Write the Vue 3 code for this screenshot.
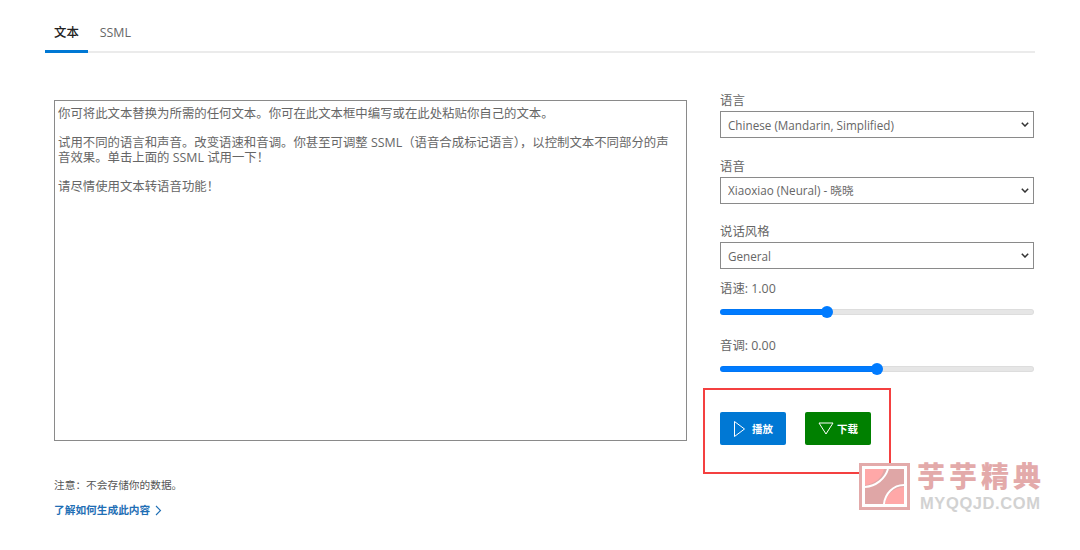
<script setup>
import { ref } from 'vue'

const text = ref('你可将此文本替换为所需的任何文本。你可在此文本框中编写或在此处粘贴你自己的文本。\n\n试用不同的语言和声音。改变语速和音调。你甚至可调整 SSML（语音合成标记语言），以控制文本不同部分的声音效果。单击上面的 SSML 试用一下！\n\n请尽情使用文本转语音功能！')

const selects = [
  { label: '语言', value: 'Chinese (Mandarin, Simplified)' },
  { label: '语音', value: 'Xiaoxiao (Neural) - 晓晓' },
  { label: '说话风格', value: 'General' },
]

const rate = ref(1)
const pitch = ref(0)
const fill = (v, min, max) => ({ '--fill': ((v - min) / (max - min)) * 100 + '%' })
</script>

<template>
  <div class="page">
    <nav class="tabs">
      <a class="tab active">文本</a>
      <a class="tab">SSML</a>
    </nav>

    <div class="main">
      <section class="left">
        <textarea v-model="text" class="editor" spellcheck="false"></textarea>
        <p class="note">注意：不会存储你的数据。</p>
        <a class="learn">了解如何生成此内容
          <svg class="chev" width="7" height="11" viewBox="0 0 7 11"><path d="M1 1l4.5 4.5L1 10" fill="none" stroke="currentColor" stroke-width="1.1"/></svg>
        </a>
      </section>

      <aside class="right">
        <div v-for="s in selects" :key="s.label" class="field">
          <label class="lbl">{{ s.label }}</label>
          <select class="sel"><option>{{ s.value }}</option></select>
        </div>

        <div class="slider">
          <label class="lbl">语速: {{ rate.toFixed(2) }}</label>
          <input v-model.number="rate" class="range" type="range" min="0.5" max="2" step="0.01" :style="fill(rate, 0.5, 2)" />
        </div>
        <div class="slider">
          <label class="lbl">音调: {{ pitch.toFixed(2) }}</label>
          <input v-model.number="pitch" class="range" type="range" min="-0.5" max="0.5" step="0.01" :style="fill(pitch, -0.5, 0.5)" />
        </div>

        <div class="actions">
          <button class="btn play">
            <svg width="13" height="18" viewBox="0 0 13 18"><path d="M1.5 1.5v15L11.5 9z" fill="none" stroke="#fff" stroke-width="1"/></svg>
            <span>播放</span>
          </button>
          <button class="btn down">
            <svg width="16" height="13" viewBox="0 0 16 13"><path d="M1 1h14L8 12z" fill="none" stroke="#fff" stroke-width="1"/></svg>
            <span>下载</span>
          </button>
          <div class="highlight"></div>
        </div>
      </aside>
    </div>

    <div class="watermark">
      <svg class="wm-logo" width="51" height="47" viewBox="0 0 51 47">
        <rect x="1" y="1" width="49" height="45" fill="#e3aaaa" stroke="#e3aaaa" stroke-width="2"/>
        <rect x="3" y="3" width="45" height="41" fill="#fff"/>
        <rect x="6" y="6" width="39" height="35" fill="#dfa6a6"/>
        <path d="M6 6h19c-2 9-9 15-19 16z" fill="#ffa8a8"/>
        <path d="M45 41H26c1-9 8-16 19-17z" fill="#ffa8a8"/>
        <path d="M6 24C17 23 26 16 29 6M25 41c1-10 9-19 20-19" fill="none" stroke="#fff" stroke-width="2"/>
      </svg>
      <div class="wm-text">
        <div class="wm-cn">芋芋精典</div>
        <div class="wm-en">MYQQJD.COM</div>
      </div>
    </div>
  </div>
</template>

<style>
html, body { margin: 0; background: #fff; }
</style>

<style scoped>
.page {
  position: relative;
  width: 1080px;
  height: 550px;
  overflow: hidden;
  padding: 17px 45px 0;
  box-sizing: border-box;
  font-family: "Open Sans", "Noto Sans CJK SC", sans-serif;
  font-size: 12.4px;
  color: #666;
}
.tabs {
  display: flex;
  height: 36px;
  box-sizing: border-box;
  border-bottom: 2px solid #ebebeb;
}
.tab {
  height: 36px;
  box-sizing: border-box;
  padding: 7px 9px 0 9px;
  line-height: 18px;
  color: #666;
  margin-right: 3px;
}
.tab.active {
  color: #222;
  font-weight: 500;
  border-bottom: 3px solid #0078d4;
}
.main {
  display: flex;
  padding: 47px 0 0 9px;
}
.left { width: 633px; margin-right: 33px; }
.editor {
  display: block;
  width: 633px;
  height: 341px;
  box-sizing: border-box;
  border: 1px solid #8a8a8a;
  padding: 6px 6px 5px 3px;
  margin: 0;
  resize: none;
  outline: none;
  font: inherit;
  line-height: 14.6px;
  color: #666;
  background: #fff;
  overflow: hidden;
}
.note {
  margin: 37px 0 0;
  font-size: 10.7px;
  line-height: 14px;
  color: #555;
}
.learn {
  display: flex;
  align-items: center;
  gap: 5px;
  margin-top: 11px;
  font-size: 10.7px;
  font-weight: 700;
  line-height: 14px;
  color: #1f6fb5;
}
.chev { color: #1f6fb5; }
.right {
  width: 314px;
  margin-top: -8px;
}
.field { margin-bottom: 19.5px; }
.field:nth-child(3) { margin-bottom: 0; }
.lbl {
  display: block;
  line-height: 18px;
  margin-bottom: 1px;
  color: #666;
}
.sel {
  display: block;
  width: 314px;
  height: 27px;
  box-sizing: border-box;
  border: 1px solid #8a8a8a;
  border-radius: 0;
  -webkit-appearance: none;
  appearance: none;
  background: #fff url("data:image/svg+xml,%3Csvg xmlns='http://www.w3.org/2000/svg' width='8' height='5'%3E%3Cpath d='M.8.8 4 4 7.2.8' fill='none' stroke='%23333' stroke-width='1.5'/%3E%3C/svg%3E") no-repeat right 4px center;
  padding: 0 3px 0 7px;
  font: inherit;
  font-size: 11.7px;
  color: #666;
  outline: none;
}
.slider { margin-top: 11px; }
.slider + .slider { margin-top: 19px; }
.range {
  display: block;
  -webkit-appearance: none;
  appearance: none;
  width: 314px;
  height: 12px;
  margin: 8px 0 0;
  background: transparent;
}
.range::-webkit-slider-runnable-track {
  height: 6px;
  border-radius: 3px;
  background: linear-gradient(to right, #007bff var(--fill), #e6e6e6 var(--fill));
  box-shadow: inset 0 0 0 1px rgba(0, 0, 0, 0.04);
}
.range::-webkit-slider-thumb {
  -webkit-appearance: none;
  width: 12px;
  height: 12px;
  margin-top: -3px;
  border-radius: 50%;
  background: #007bff;
  border: 0;
}
.actions {
  position: relative;
  display: flex;
  gap: 19px;
  margin-top: 37px;
}
.btn {
  display: flex;
  align-items: center;
  justify-content: center;
  gap: 6px;
  height: 33px;
  border: 0;
  border-radius: 2px;
  color: #fff;
  font: inherit;
  font-size: 10.5px;
  font-weight: 700;
  padding: 0;
}
.btn.play { width: 66px; background: #0078d4; }
.btn.down { width: 66px; background: #008000; gap: 3px; }
.highlight {
  position: absolute;
  left: -17px;
  top: -24px;
  width: 184px;
  height: 82px;
  border: 2.5px solid #f44040;
  pointer-events: none;
}
.watermark {
  position: absolute;
  left: 859px;
  top: 463px;
  display: flex;
  gap: 7px;
}
.wm-text { width: 126px; }
.wm-cn {
  font-family: "Liberation Sans", "Noto Sans CJK SC", sans-serif;
  font-weight: 900;
  font-size: 28px;
  line-height: 30px;
  letter-spacing: 4px;
  color: #e3aaaa;
  white-space: nowrap;
}
.wm-en {
  font-family: "Liberation Sans", sans-serif;
  font-weight: 700;
  font-size: 16.5px;
  line-height: 16px;
  letter-spacing: 0.6px;
  color: #d2d2d2;
  margin: 2px 0 0 3px;
  white-space: nowrap;
}
</style>
